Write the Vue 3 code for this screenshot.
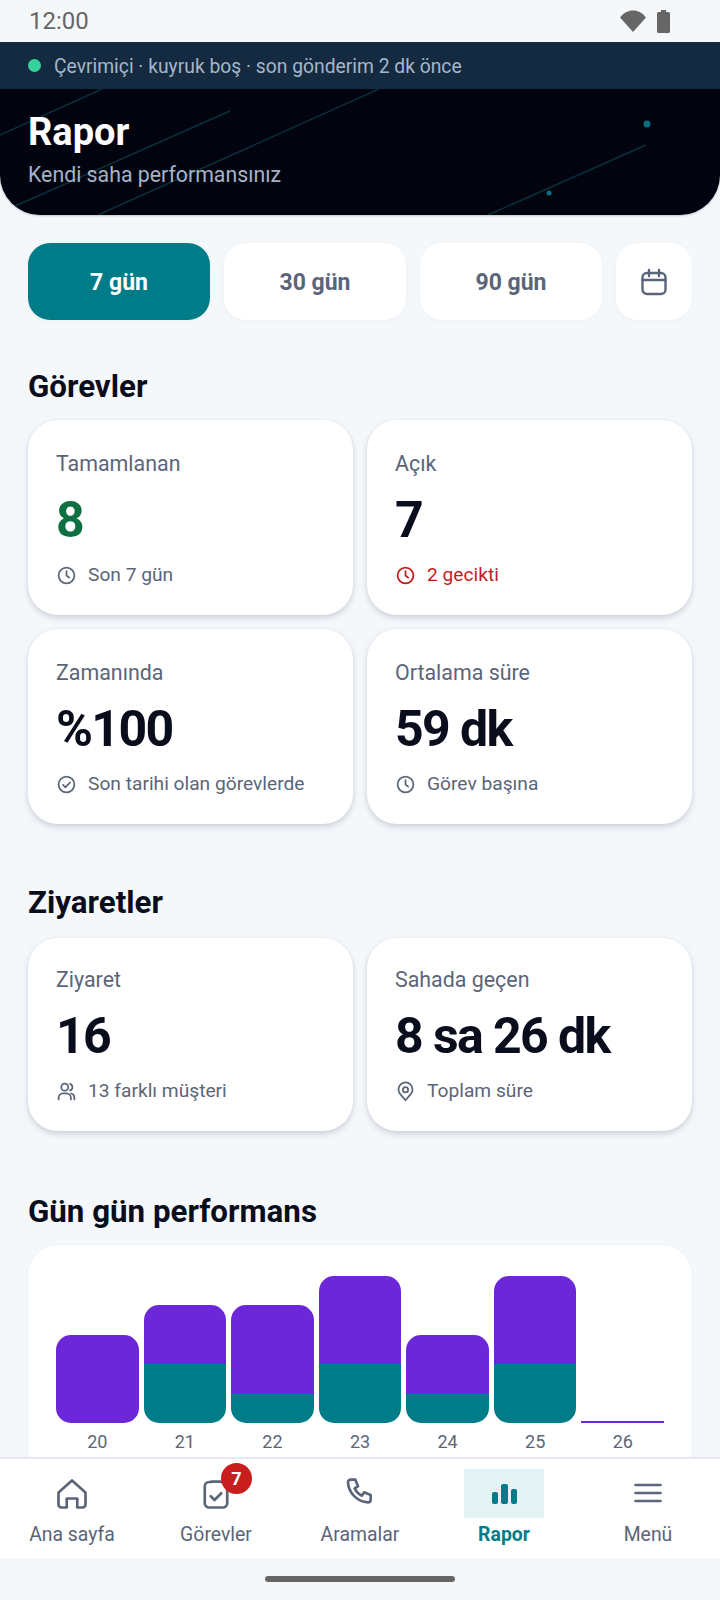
<script setup>
const icons = {
  clock: ['M12 3a9 9 0 1 0 0 18a9 9 0 0 0 0-18z', 'M12 7v5l3 2.5'],
  check: ['M12 3a9 9 0 1 0 0 18a9 9 0 0 0 0-18z', 'M8 12.5l2.8 2.8l5.2-5.6'],
  users: [
    'M10 11a4 4 0 1 0 0-8a4 4 0 0 0 0 8z',
    'M3 21v-2a5 5 0 0 1 5-5h4a5 5 0 0 1 5 5v2',
    'M16 3.2a4 4 0 0 1 0 7.6',
    'M21 21v-2a5 5 0 0 0-3.5-4.7'
  ],
  pin: [
    'M12 13a3 3 0 1 0 0-6a3 3 0 0 0 0 6z',
    'M12 22l-6-7a8 8 0 1 1 12 0z'
  ]
}

const taskCards = [
  { label: 'Tamamlanan', value: '8', valueClass: 'green', icon: 'clock', meta: 'Son 7 gün' },
  { label: 'Açık', value: '7', icon: 'clock', meta: '2 gecikti', metaClass: 'red' },
  { label: 'Zamanında', value: '%100', icon: 'check', meta: 'Son tarihi olan görevlerde' },
  { label: 'Ortalama süre', value: '59 dk', icon: 'clock', meta: 'Görev başına' }
]

const visitCards = [
  { label: 'Ziyaret', value: '16', icon: 'users', meta: '13 farklı müşteri' },
  { label: 'Sahada geçen', value: '8 sa 26 dk', icon: 'pin', meta: 'Toplam süre' }
]

const sections = [
  { title: 'Görevler', cards: taskCards, cls: 'tasks' },
  { title: 'Ziyaretler', cards: visitCards, cls: 'visits' }
]

// one unit of a bar = 29.4px
const unit = 29.4
const days = [
  { day: 20, visits: 3, tasks: 0 },
  { day: 21, visits: 2, tasks: 2 },
  { day: 22, visits: 3, tasks: 1 },
  { day: 23, visits: 3, tasks: 2 },
  { day: 24, visits: 2, tasks: 1 },
  { day: 25, visits: 3, tasks: 2 },
  { day: 26, visits: 0, tasks: 0 }
]
</script>

<template>
  <div class="screen">
    <div class="status">
      <span class="time">12:00</span>
      <div class="status-icons">
        <svg width="26" height="22" viewBox="0 0 26 22"><path d="M0 7.5C3.5 3 8 .5 13 .5s9.5 2.500 13 7L13 22z" fill="#666" /></svg>
        <svg width="13" height="23" viewBox="0 0 13 23"><path d="M4 0h5v2h2.500A1.500 1.500 0 0 1 13 3.500V21.500A1.500 1.500 0 0 1 11.500 23H1.500A1.500 1.500 0 0 1 0 21.500V3.500A1.500 1.500 0 0 1 1.500 2H4z" fill="#666" /></svg>
      </div>
    </div>

    <div class="banner">
      <span class="dot"></span>
      <span class="banner-text">Çevrimiçi · kuyruk boş · son gönderim 2 dk önce</span>
    </div>

    <div class="hero">
      <svg class="hero-art" width="720" height="126" viewBox="0 0 720 126">
        <g stroke="#0b2f3a" stroke-width="1.500">
          <line x1="0" y1="46" x2="102" y2="0" />
          <line x1="13" y1="118" x2="230" y2="22" />
          <line x1="98" y1="126" x2="379" y2="0" />
          <line x1="488" y1="126" x2="646" y2="56" />
        </g>
        <circle cx="647" cy="35" r="3.500" fill="#0b6c82" />
        <circle cx="549" cy="104" r="2.500" fill="#0b6c82" />
      </svg>
      <h1>Rapor</h1>
      <p>Kendi saha performansınız</p>
    </div>

    <div class="scroll">
      <div class="ranges">
        <button class="range active">7 gün</button>
        <button class="range">30 gün</button>
        <button class="range">90 gün</button>
        <button class="range cal">
          <svg width="28" height="28" viewBox="0 0 28 28" fill="none" stroke="#5b6579" stroke-width="2.400" stroke-linecap="round">
            <rect x="2.500" y="5" width="23" height="21" rx="4.500" />
            <path d="M2.500 12h23M9 2v6M19 2v6" />
          </svg>
        </button>
      </div>

      <section v-for="s in sections" :key="s.title" :class="s.cls">
        <h2>{{ s.title }}</h2>
        <div class="grid">
          <div v-for="c in s.cards" :key="c.label" class="card">
            <div class="label">{{ c.label }}</div>
            <div class="value" :class="c.valueClass">{{ c.value }}</div>
            <div class="meta" :class="c.metaClass">
              <svg width="21" height="21" viewBox="0 0 24 24" fill="none" stroke="currentColor" stroke-width="2" stroke-linecap="round" stroke-linejoin="round">
                <path v-for="d in icons[c.icon]" :key="d" :d="d" />
              </svg>
              <span>{{ c.meta }}</span>
            </div>
          </div>
        </div>
      </section>

      <section class="daily">
        <h2>Gün gün performans</h2>
        <div class="chart">
          <div v-for="d in days" :key="d.day" class="col">
            <div class="bar" :class="{ empty: !d.visits && !d.tasks }">
              <div class="seg purple" :style="{ height: d.visits * unit + 'px' }"></div>
              <div class="seg teal" :style="{ height: d.tasks * unit + 'px' }"></div>
            </div>
            <span class="day">{{ d.day }}</span>
          </div>
        </div>
      </section>
    </div>

    <nav class="nav">
      <div class="tab">
        <div class="tab-icon">
          <svg width="36" height="36" viewBox="0 0 24 24" fill="none" stroke="#5b6579" stroke-width="1.800" stroke-linecap="round" stroke-linejoin="round">
            <path d="M3 11l9-8l9 8v8a2 2 0 0 1-2 2h-3.500v-6h-7v6H5a2 2 0 0 1-2-2z" />
          </svg>
        </div>
        <span>Ana sayfa</span>
      </div>
      <div class="tab">
        <div class="tab-icon">
          <svg width="36" height="36" viewBox="0 0 24 24" fill="none" stroke="#5b6579" stroke-width="1.800" stroke-linecap="round" stroke-linejoin="round">
            <path d="M9 4H7.500a3 3 0 0 0-3 3v11a3 3 0 0 0 3 3h9a3 3 0 0 0 3-3V7a3 3 0 0 0-3-3H15" />
            <path d="M9 3.800h6" />
            <path d="M8.500 13.500l2.500 2.500l4.500-4.500" />
          </svg>
          <span class="badge">7</span>
        </div>
        <span>Görevler</span>
      </div>
      <div class="tab">
        <div class="tab-icon">
          <svg class="phone" width="32" height="32" viewBox="0 0 24 24" fill="none" stroke="#5b6579" stroke-width="2" stroke-linecap="round" stroke-linejoin="round">
            <path d="M5 3.500h3.500l2 5l-2.500 1.500a11 11 0 0 0 5.500 5.500l1.500-2.500l5 2v3.500a2 2 0 0 1-2 2a16 16 0 0 1-15-15a2 2 0 0 1 2-2" />
          </svg>
        </div>
        <span>Aramalar</span>
      </div>
      <div class="tab current">
        <div class="tab-icon pill">
          <svg width="36" height="36" viewBox="0 0 36 36" fill="#007c89">
            <rect x="6" y="16" width="6" height="12" rx="2" />
            <rect x="15" y="8" width="7" height="20" rx="2" />
            <rect x="25" y="13" width="6" height="15" rx="2" />
          </svg>
        </div>
        <span>Rapor</span>
      </div>
      <div class="tab">
        <div class="tab-icon">
          <svg class="menu" width="36" height="36" viewBox="0 0 36 36" fill="none" stroke="#5b6579" stroke-width="2.600" stroke-linecap="round">
            <path d="M5.500 10h25M5.500 18h25M5.500 26h25" />
          </svg>
        </div>
        <span>Menü</span>
      </div>
    </nav>

    <div class="gesture"><span></span></div>
  </div>
</template>

<style scoped>
.screen {
  width: 720px;
  height: 1600px;
  display: flex;
  flex-direction: column;
  overflow: hidden;
  background: #f5f8fb;
  font-family: Roboto, "Noto Sans", sans-serif;
  color: #0a0e1c;
}

.status {
  height: 42px;
  flex: none;
  display: flex;
  align-items: center;
  justify-content: space-between;
  padding: 0 50px 0 29px;
  box-sizing: border-box;
}

.time {
  font-size: 24px;
  color: #666;
}

.status-icons {
  display: flex;
  align-items: center;
  gap: 11px;
}

.banner {
  height: 47px;
  flex: none;
  display: flex;
  align-items: center;
  gap: 13px;
  padding-left: 28px;
  background: #142a40;
  color: #a5b6ca;
  font-size: 19.3px;
}

.banner-text {
  padding-top: 2px;
}

.dot {
  width: 13px;
  height: 13px;
  border-radius: 50%;
  background: #34d399;
}

.hero {
  position: relative;
  height: 126px;
  flex: none;
  box-sizing: border-box;
  padding: 21px 28px 0;
  background: #01040f;
  border-radius: 0 0 40px 40px;
  overflow: hidden;
  box-shadow: 0 1px 2px rgba(40, 50, 70, 0.25);
}

.hero-art {
  position: absolute;
  left: 0;
  top: 0;
}

.hero h1 {
  position: relative;
  margin: 0;
  font-size: 38px;
  line-height: 44px;
  font-weight: 700;
  color: #fff;
}

.hero p {
  position: relative;
  margin: 8px 0 0;
  font-size: 21.3px;
  line-height: 26px;
  color: #a5b3c6;
}

.scroll {
  flex: 1;
  min-height: 0;
  overflow: hidden;
  padding: 28px 28px 0;
}

.ranges {
  display: flex;
  gap: 14px;
}

.range {
  flex: 1;
  height: 77px;
  padding: 2px 0 0;
  border: 0;
  border-radius: 22px;
  background: #fff;
  color: #5b6579;
  font-family: inherit;
  font-size: 23px;
  font-weight: 700;
  box-shadow: 0 1px 4px rgba(40, 60, 90, 0.04);
}

.range.active {
  background: #007c89;
  color: #fff;
}

.range.cal {
  flex: 0 0 76px;
  display: flex;
  align-items: center;
  justify-content: center;
  padding: 0;
}

section {
  margin-top: 61px;
}

section h2 {
  margin: 0 0 17px;
  font-size: 31.3px;
  line-height: 36px;
  font-weight: 700;
}

section.tasks {
  margin-top: 49px;
}

section.tasks h2 {
  margin-bottom: 15px;
}

section.daily {
  margin-top: 63px;
}

section.daily h2 {
  margin-bottom: 15px;
}

.grid {
  display: grid;
  grid-template-columns: 1fr 1fr;
  gap: 14px;
}

.card {
  height: 195px;
  box-sizing: border-box;
  padding: 30px 28px 0;
  background: #fff;
  border-radius: 30px;
  box-shadow: 0 3px 6px rgba(30, 40, 70, 0.18), 0 0 3px rgba(30, 40, 70, 0.04);
}

.visits .card {
  height: 193px;
  padding-top: 28px;
}

.label {
  font-size: 21.4px;
  line-height: 28px;
  color: #5b6579;
}

.value {
  margin-top: 14px;
  font-size: 50px;
  line-height: 56px;
  font-weight: 700;
  letter-spacing: -1.6px;
}

.value.green {
  color: #0e6f41;
}

.meta {
  display: flex;
  align-items: center;
  gap: 11px;
  margin-top: 14px;
  font-size: 19.2px;
  line-height: 26px;
  color: #5b6579;
}

.meta.red {
  color: #c41c1c;
}

.chart {
  display: flex;
  gap: 5px;
  height: 260px;
  box-sizing: border-box;
  padding: 31px 28px 0;
  background: #fff;
  border-radius: 30px 30px 0 0;
  box-shadow: 0 0 3px rgba(30, 40, 70, 0.08);
}

.col {
  flex: 1;
  display: flex;
  flex-direction: column;
  align-items: stretch;
}

.bar {
  height: 147px;
  display: flex;
  flex-direction: column;
  justify-content: flex-end;
}

.bar .seg:first-child {
  border-radius: 15px 15px 0 0;
}

.bar .seg:last-child {
  border-radius: 0 0 15px 15px;
}

.bar .seg.purple {
  background: #6b27d8;
}

.bar .seg.teal {
  background: #007c89;
}

.col:first-child .seg.purple {
  border-radius: 15px;
}

.bar.empty {
  border-bottom: 2px solid #6b27d8;
  box-sizing: border-box;
}

.day {
  margin-top: 8px;
  text-align: center;
  font-size: 18px;
  line-height: 22px;
  color: #5b6579;
}

.nav {
  position: relative;
  height: 101px;
  flex: none;
  display: grid;
  grid-template-columns: repeat(5, 1fr);
  box-sizing: border-box;
  padding-top: 10px;
  background: #fff;
  border-top: 2px solid #e6e9f2;
}

.tab {
  display: flex;
  flex-direction: column;
  align-items: center;
  font-size: 19.4px;
  line-height: 24px;
  color: #5b6579;
}

.tab-icon {
  position: relative;
  width: 80px;
  height: 49px;
  margin-bottom: 5px;
  display: flex;
  align-items: center;
  justify-content: center;
}

.phone {
  margin-bottom: 5px;
}

.menu {
  margin-bottom: 2px;
}

.pill {
  background: #e3f3f4;
}

.current {
  color: #007c89;
  font-weight: 700;
}

.badge {
  position: absolute;
  left: 45px;
  top: -6px;
  width: 31px;
  height: 31px;
  border-radius: 50%;
  background: #c81e1e;
  color: #fff;
  font-size: 18px;
  font-weight: 700;
  line-height: 31px;
  text-align: center;
}

.gesture {
  height: 42px;
  flex: none;
  display: flex;
  justify-content: center;
  padding-top: 18px;
  box-sizing: border-box;
}

.gesture span {
  width: 190px;
  height: 6px;
  border-radius: 3px;
  background: #666;
}
</style>

<style>
body {
  margin: 0;
  background: #f5f8fb;
}
</style>
